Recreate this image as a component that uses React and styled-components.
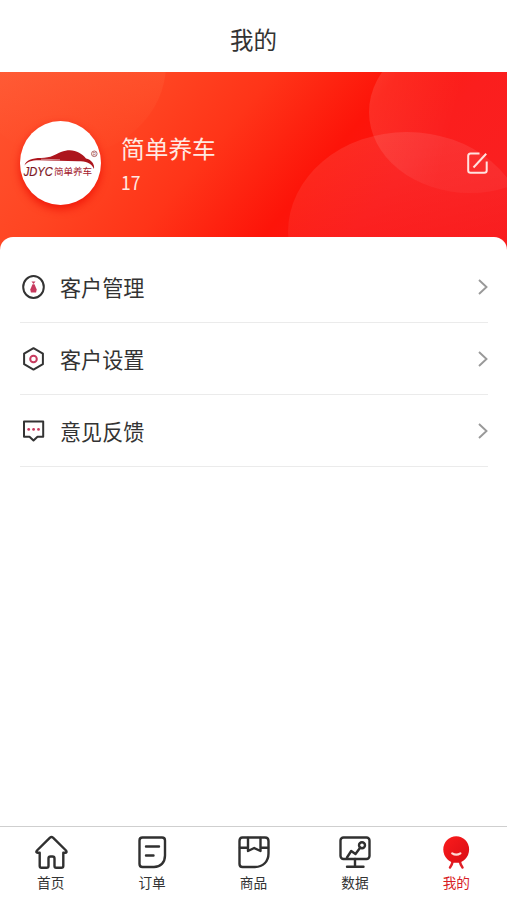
import React, { useState } from "react";
import styled, { createGlobalStyle } from "styled-components";

const GlobalStyle = createGlobalStyle`
  * {
    box-sizing: border-box;
  }
  body {
    margin: 0;
    background: #fff;
    color: #333;
    font-family: "Noto Sans CJK SC", sans-serif;
  }
  button {
    border: 0;
    padding: 0;
    background: none;
    color: inherit;
    font-family: inherit;
  }
  svg {
    display: block;
    overflow: visible;
  }
`;

const Page = styled.div`
  display: flex;
  flex-direction: column;
  height: 100vh;
  overflow: hidden;
`;

const Header = styled.header`
  flex: none;
  display: flex;
  align-items: center;
  justify-content: center;
  height: 72px;
  padding-top: 6px;
`;

const Title = styled.h1`
  margin: 0;
  font-size: 23.5px;
  font-weight: 400;
  line-height: 32px;
`;

const Banner = styled.section`
  position: relative;
  flex: none;
  height: 179px;
  background: linear-gradient(
    130deg,
    #ff5430 0%,
    #ff4522 25%,
    #ff3418 42%,
    #fd1409 61%,
    #fb1514 74%,
    #f91719 100%
  );
`;

const Bubbles = styled.svg`
  position: absolute;
  inset: 0;
  width: 100%;
  height: 100%;

  && {
    overflow: hidden;
  }
`;

const Profile = styled.div`
  position: relative;
  display: flex;
  align-items: center;
  height: 182px;
  padding: 0 19px 0 20px;
`;

const Avatar = styled.div`
  flex: none;
  width: 81px;
  height: 84px;
  border-radius: 50%;
  background: #fff;
  box-shadow: 0 4px 8px rgba(235, 10, 0, 0.75);
`;

const Info = styled.div`
  flex: 1;
  margin-left: 20px;
  color: #ffe9e2;
`;

const Name = styled.div`
  font-size: 23.7px;
  line-height: 34px;
`;

const Count = styled.div`
  margin-top: 3px;
  font-size: 19.5px;
  line-height: 28px;
  transform: scaleX(0.9);
  transform-origin: left;
`;

const Panel = styled.main`
  position: relative;
  flex: 1;
  margin-top: -14px;
  padding: 14px 19px 0 20px;
  border-radius: 13px 13px 0 0;
  background: #fff;
`;

const Row = styled.button`
  display: flex;
  align-items: center;
  width: 100%;
  height: 72px;
  border-bottom: 1px solid #ebebeb;
  text-align: left;
`;

const RowLabel = styled.span`
  flex: 1;
  margin-left: 13px;
  font-size: 21.1px;
  line-height: 30px;
`;

const RowIcon = styled.span`
  width: 27px;
`;

const Tabs = styled.nav`
  flex: none;
  display: flex;
  height: 74px;
  border-top: 1px solid #cfcfcf;
`;

const Tab = styled.button`
  flex: 1;
  display: flex;
  flex-direction: column;
  align-items: center;
  padding-top: 7px;
  color: ${(p) => (p.$active ? "#d81e26" : "#333")};
`;

const TabLabel = styled.span`
  margin-top: 2px;
  font-size: 13.7px;
  line-height: 20px;
`;

function Logo() {
  return (
    <svg width="81" height="84" viewBox="0 0 81 84">
      <path
        d="M4.500 44.500 C6 39 12 37 21 37 C31 37 36 33 41 31 C52 26.500 61 31 66 37.500 C71 38.500 75 43 74 48 C71 41.500 66 40.300 58 40.300 L19 39.200 C11 39.200 7 41 4.500 44.500Z"
        fill="#ad151d"
      />
      <path d="M21 38.200 L40 38.800" stroke="#fff" strokeWidth="0.500" />
      <circle cx="74.300" cy="32.800" r="2.800" fill="none" stroke="#a75a5a" strokeWidth="0.900" />
      <text x="72.800" y="34.500" fontSize="4.500" fill="#a75a5a" fontFamily="Liberation Sans">
        R
      </text>
      <text
        x="3.800"
        y="55"
        fontSize="12.500"
        fontStyle="italic"
        fill="#7d1723"
        stroke="#7d1723"
        strokeWidth="0.200"
        fontFamily="Liberation Sans, sans-serif"
        textLength="29"
        lengthAdjust="spacingAndGlyphs"
      >
        JDYC
      </text>
      <text x="34" y="54" fontSize="9.600" fill="#a3202b" textLength="38">
        简单养车
      </text>
    </svg>
  );
}

function EditIcon() {
  return (
    <svg width="21" height="22" viewBox="0 0 21 22" fill="none" stroke="#ffe3e0" strokeWidth="2">
      <path d="M12.500 1.500 H3.500 Q1.200 1.500 1.200 4 V18.500 Q1.200 20.800 3.500 20.800 H17.200 Q19.700 20.800 19.700 18.500 V9.500" />
      <path d="M6.500 15.500 L19.200 1.800" />
    </svg>
  );
}

function Chevron() {
  return (
    <svg width="10" height="16" viewBox="0 0 10 16" fill="none" stroke="#999" strokeWidth="1.900">
      <path d="M1 1 L8.500 8 L1 15" />
    </svg>
  );
}

function ManageIcon() {
  return (
    <svg width="27" height="26" viewBox="0 0 27 26">
      <ellipse cx="13.500" cy="13" rx="10.300" ry="10.900" fill="none" stroke="#333" strokeWidth="2" />
      <path d="M11.500 7.500 H15.500 L13.500 10Z" fill="#c73a5e" />
      <path d="M12.500 10.300 H14.500 L16.700 15.500 L16.100 18.500 H10.900 L10.300 15.500Z" fill="#c73a5e" />
    </svg>
  );
}

function SettingIcon() {
  return (
    <svg width="27" height="26" viewBox="0 0 27 26" fill="none">
      <path
        d="M13.500 2.200 L22.900 7.600 V18.200 L13.500 23.600 L4.100 18.200 V7.600Z"
        stroke="#333"
        strokeWidth="2"
        strokeLinejoin="round"
      />
      <circle cx="13.500" cy="13" r="3.300" stroke="#c73a5e" strokeWidth="2" />
    </svg>
  );
}

function FeedbackIcon() {
  return (
    <svg width="27" height="26" viewBox="0 0 27 26">
      <path
        d="M4 3.500 H23.200 V18.700 H17.500 L13.500 22.500 L9.500 18.700 H4Z"
        fill="none"
        stroke="#333"
        strokeWidth="2"
        strokeLinejoin="round"
      />
      <g fill="#c73a5e">
        <circle cx="8.700" cy="11.400" r="1.400" />
        <circle cx="13.600" cy="11.400" r="1.400" />
        <circle cx="18.500" cy="11.400" r="1.400" />
      </g>
    </svg>
  );
}

const TabSvg = styled.svg.attrs({
  width: 36,
  height: 36,
  viewBox: "0 0 36 36",
  fill: "none",
  stroke: "#303030",
  strokeWidth: 2.4,
  strokeLinecap: "round",
  strokeLinejoin: "round",
})``;

function HomeIcon() {
  return (
    <TabSvg>
      <path d="M17 3.600 Q18.500 2.400 20 3.600 L33 16.500 Q34.500 18.700 32 18.800 H30.300 V32 Q30.300 33.700 28.300 33.700 H23.200 Q21.500 33.700 21.500 32 V24.500 Q21.500 22.500 19.500 22.500 H17.500 Q15.500 22.500 15.500 24.500 V32 Q15.500 33.700 13.500 33.700 H8.500 Q6.700 33.700 6.700 32 V18.800 H4.800 Q2.300 18.700 4 16.500 Z" />
    </TabSvg>
  );
}

function OrderIcon() {
  return (
    <TabSvg>
      <path d="M8.500 3.500 H28 Q31 3.500 31 6.500 V21.500 C31 28.500 26.500 33 20 33 H8.500 Q5.500 33 5.500 30 V6.500 Q5.500 3.500 8.500 3.500Z" />
      <path d="M12 12.500 H25 M12 21.500 H19.500" />
    </TabSvg>
  );
}

function GoodsIcon() {
  return (
    <TabSvg>
      <path d="M6.500 3.500 H29 Q32.500 3.500 32.500 7 V19.500 C32.500 27.500 27 33 19 33 H6.500 Q3.500 33 3.500 30 V7 Q3.500 3.500 6.500 3.500Z" />
      <path d="M4 13.800 H12 M25 13.800 H32 M12 4 V17 L18.200 14 L24.500 17 V4" />
    </TabSvg>
  );
}

function DataIcon() {
  return (
    <TabSvg>
      <rect x="3.500" y="3.500" width="29" height="21.500" rx="3" />
      <path d="M18 25 V32 M10 32.700 H26.500" />
      <path d="M10 23.500 L14.200 17 L18.500 20 L23.300 13.500" />
      <circle cx="25" cy="11.200" r="3" />
    </TabSvg>
  );
}

function MineIcon() {
  return (
    <TabSvg>
      <defs>
        <linearGradient id="mine" x1="0" y1="0" x2="1" y2="1">
          <stop offset="0" stopColor="#fb1c1c" />
          <stop offset="1" stopColor="#d90d15" />
        </linearGradient>
      </defs>
      <path d="M14.500 28 Q14 31 12 33.500 M22 28 Q22.500 31 24.500 33.500" stroke="#df2028" strokeWidth="2.500" />
      <ellipse cx="18.200" cy="15.500" rx="12.900" ry="13.300" fill="url(#mine)" stroke="none" />
      <path d="M14.200 19.300 Q18.300 22 22.400 19.300" stroke="#ffd9d5" strokeWidth="2.200" />
    </TabSvg>
  );
}

const rows = [
  { label: "客户管理", Icon: ManageIcon },
  { label: "客户设置", Icon: SettingIcon },
  { label: "意见反馈", Icon: FeedbackIcon },
];

const tabs = [
  { label: "首页", Icon: HomeIcon },
  { label: "订单", Icon: OrderIcon },
  { label: "商品", Icon: GoodsIcon },
  { label: "数据", Icon: DataIcon },
  { label: "我的", Icon: MineIcon },
];

function App() {
  const [active, setActive] = useState(4);

  return (
    <Page>
      <GlobalStyle />
      <Header>
        <Title>我的</Title>
      </Header>
      <Banner>
        <Bubbles viewBox="0 0 507 179" preserveAspectRatio="none">
          <defs>
            <linearGradient id="bubble" x1="0.3" y1="0" x2="0.5" y2="0.8">
              <stop offset="0" stopColor="#fff" stopOpacity="0.1" />
              <stop offset="1" stopColor="#fff" stopOpacity="0.01" />
            </linearGradient>
            <linearGradient id="side" x1="0" y1="0.5" x2="1" y2="0.7">
              <stop offset="0" stopColor="#fff" stopOpacity="0.11" />
              <stop offset="0.4" stopColor="#fff" stopOpacity="0.04" />
            </linearGradient>
            <linearGradient id="corner" x1="0.6" y1="0.5" x2="0.55" y2="1">
              <stop offset="0" stopColor="#ff8050" stopOpacity="0.18" />
              <stop offset="1" stopColor="#ff8050" stopOpacity="0" />
            </linearGradient>
          </defs>
          <ellipse cx="66" cy="-8" rx="100" ry="92" fill="url(#corner)" />
          <ellipse cx="470" cy="40" rx="101" ry="81" fill="url(#side)" />
          <ellipse cx="407" cy="160" rx="119" ry="100" fill="url(#bubble)" />
        </Bubbles>
        <Profile>
          <Avatar>
            <Logo />
          </Avatar>
          <Info>
            <Name>简单养车</Name>
            <Count>17</Count>
          </Info>
          <EditIcon />
        </Profile>
      </Banner>
      <Panel>
        {rows.map(({ label, Icon }) => (
          <Row key={label}>
            <RowIcon>
              <Icon />
            </RowIcon>
            <RowLabel>{label}</RowLabel>
            <Chevron />
          </Row>
        ))}
      </Panel>
      <Tabs>
        {tabs.map(({ label, Icon }, key) => (
          <Tab key={label} $active={key === active} onClick={() => setActive(key)}>
            <Icon />
            <TabLabel>{label}</TabLabel>
          </Tab>
        ))}
      </Tabs>
    </Page>
  );
}

export default App;
